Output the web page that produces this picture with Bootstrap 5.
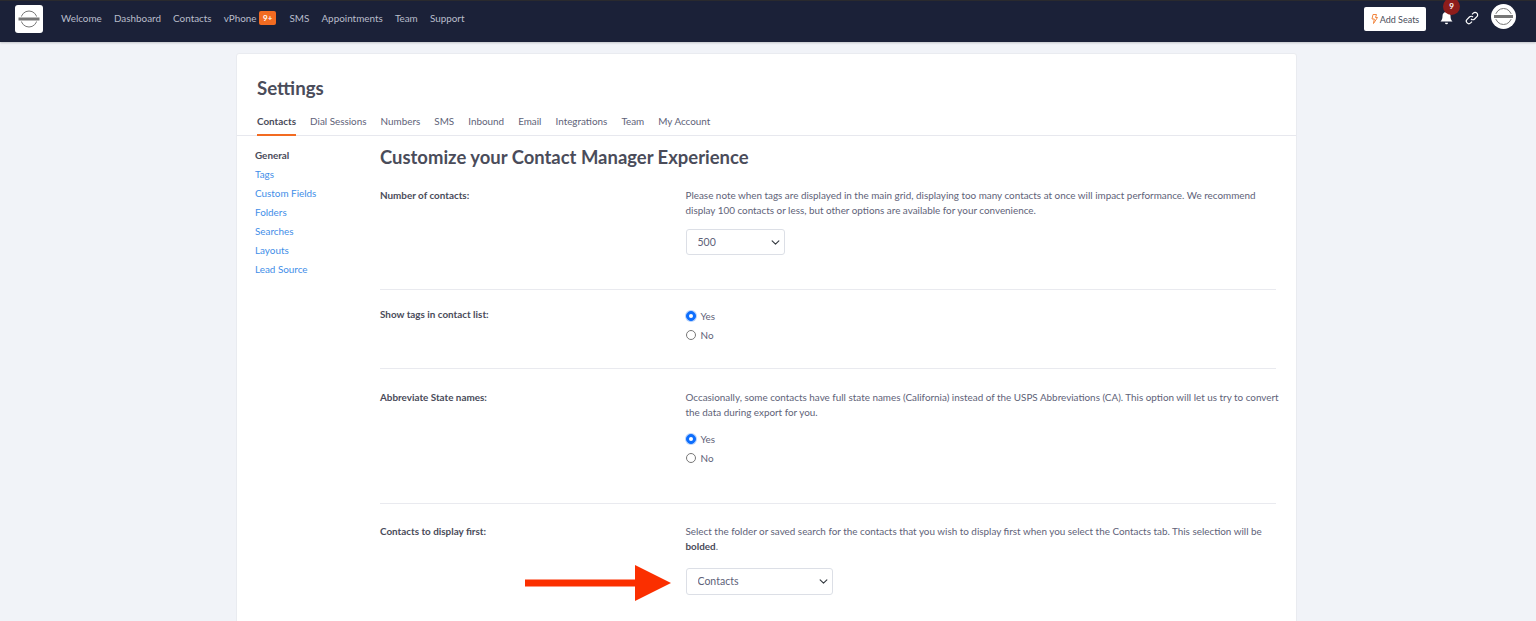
<!DOCTYPE html>
<html lang="en"><head><meta charset="utf-8"><title>Settings</title>
<link href="https://cdn.jsdelivr.net/npm/bootstrap@5.3.0/dist/css/bootstrap.min.css" rel="stylesheet">
<style>
html,body{height:621px;overflow:hidden}
body{background:#f1f3f8;font-family:Lato,"Liberation Sans",sans-serif;font-size:9.9px;color:#5e6278}
.topbar{background:#1b2138;height:41.5px;border-top:1px solid #2a2a2e;padding:0 20px 4px 15px;box-shadow:0 1px 2px rgba(0,0,0,.2)}
.logo-box{width:28px;height:28px;background:#fff;border-radius:3px;margin-right:18px}
.toplink{color:#b9bdcb;font-size:9.9px;text-decoration:none;margin:0 12.15px 2px 0;display:flex;align-items:center}
.orange-tag{background:#f26b21;color:#fff;font-size:8px;font-weight:700;padding:0 4px;height:14px;line-height:14px;border-radius:2px;margin-left:2.5px;margin-right:1px}
.seat-btn{background:#fff;border:0;border-radius:2px;height:24px;width:62px;font-size:9px;color:#4a4d5a;padding:0;margin-right:14px;display:flex;align-items:center;justify-content:center}
.bell-wrap{position:relative;width:14px;height:16px;margin:0 11px 4px 0}
.bell-count{position:absolute;left:3px;top:-11px;width:17px;height:17px;background:#8e1d1b;border-radius:50%;color:#fff;font-size:8px;font-weight:700;line-height:16px;text-align:center}
.link-ico{margin:0 12px 3px 0}
.avatar-ico{margin-bottom:6px}
.panel{width:1061px;height:700px;margin:11px 0 0 236px;background:#fff;border:1px solid #e9ebf0;border-radius:3px;position:relative}
.panel-title{font-size:18.7px;font-weight:700;color:#4a4c5a;padding:24px 0 0 20px;margin:0;line-height:21px}
.tab-row{border-bottom:1px solid #e7e8ee;padding:0 20px;gap:14.05px;margin-top:12px;height:25px}
.tab-item{color:#5e6278;font-size:9.9px;text-decoration:none;height:25px;line-height:21px}
.tab-item.on{font-weight:700;color:#4a4c5a;border-bottom:2px solid #f26b21}
.side{width:143px;padding:10px 0 0 18px}
.side a{display:block;height:19px;line-height:19px;color:#3f8ee8;text-decoration:none}
.side a.on{color:#4a4c5a;font-weight:700}
.main{width:896px;padding-top:9px}
.main-h{font-size:18.45px;font-weight:700;color:#4a4c5a;line-height:24px;margin:0 0 19px}
.sect{border-bottom:1px solid #e9eaef;display:flex}
.sect-l{width:305.5px;font-weight:700;color:#4a4c5a;line-height:15px;flex:none}
.sect-r{flex:1;line-height:15px}
.sect-r p{margin:0 -4px 11px 0}
.sect-r b{color:#4a4c5a}
.sel{font-size:10.5px;height:26px;color:#5e6278;padding:1px 11px 0;border-color:#dcdfe6;border-radius:3px;background-position:right 4px center;background-size:9px 9px;font-family:inherit}
.sel-a{width:99px}.sel-b{width:147px;height:27px}
.radio-line{margin:0;padding-left:0;min-height:0;height:19px;display:flex;align-items:center;gap:5px;font-size:9.9px}
.radio-line .form-check-input{float:none;margin:0;width:10px;height:10px;flex:none;border-color:#777}
.radio-line .form-check-input:checked{border-color:#0d6efd;box-shadow:0 0 0 1px #b8d3fb}
.s1{height:102px;padding-top:.5px}.s2{height:79px;padding-top:17px}.s3{height:135px;padding-top:21px}.s4{padding-top:20px;border:0}
.sect-r .para-b{margin-bottom:10px}
.sect-r .para-c{margin-right:0;margin-bottom:14px}
.pointer{position:absolute;left:288px;top:511px}
</style></head><body>
<nav class="topbar d-flex align-items-center">
<div class="logo-box d-flex align-items-center justify-content-center">
<svg width="26" height="26" viewBox="0 0 26 26"><circle cx="13" cy="13" r="8" fill="none" stroke="#777" stroke-width="1"/><rect x="2" y="10.500" width="22" height="5" fill="#fff"/><rect x="2.500" y="11.500" width="21" height="3" fill="#777"/></svg>
</div>
<a class="toplink" href="#">Welcome</a><a class="toplink" href="#">Dashboard</a><a class="toplink" href="#">Contacts</a>
<a class="toplink" href="#">vPhone<span class="orange-tag">9+</span></a>
<a class="toplink" href="#">SMS</a><a class="toplink" href="#">Appointments</a><a class="toplink" href="#">Team</a><a class="toplink" href="#">Support</a>
<div class="ms-auto d-flex align-items-center">
<button class="seat-btn" type="button"><svg width="7" height="10" viewBox="0 0 7 10"><path d="M2 .5h3.500L4.500 3.500h2L2.500 9.500l.8-4.500H1z" fill="none" stroke="#f2853d" stroke-width="1"/></svg>&nbsp;Add Seats</button>
<div class="bell-wrap"><svg width="13" height="15" viewBox="0 0 13 15"><path d="M6.500 1a1 1 0 0 1 1 1c2 .5 3 2 3 4 0 3 .7 4 2 5.500H.5C1.800 10 2.500 9 2.500 6c0-2 1-3.500 3-4a1 1 0 0 1 1-1z" fill="#fff"/><path d="M5 12.800h3a1.500 1.500 0 0 1-3 0z" fill="#fff"/></svg><span class="bell-count">9</span></div>
<svg class="link-ico" width="14" height="14" viewBox="0 0 14 14" fill="none" stroke="#fff" stroke-width="1.200"><path d="M6 8a2.500 2.500 0 0 0 3.600 0l2.300-2.300a2.500 2.500 0 0 0-3.600-3.600L7 3.400"/><path d="M8 6a2.500 2.500 0 0 0-3.600 0L2.100 8.300a2.500 2.500 0 0 0 3.600 3.600L7 10.600"/></svg>
<svg class="avatar-ico" width="25" height="25" viewBox="0 0 25 25"><circle cx="12.500" cy="12.500" r="12.500" fill="#fff"/><circle cx="12.500" cy="12.500" r="8" fill="none" stroke="#777"/><rect x="2.500" y="10" width="20" height="5" fill="#fff"/><rect x="3" y="11" width="19" height="3" fill="#777"/></svg>
</div>
</nav>
<div class="panel">
<h1 class="panel-title">Settings</h1>
<div class="tab-row d-flex">
<a class="tab-item on" href="#">Contacts</a><a class="tab-item" href="#">Dial Sessions</a><a class="tab-item" href="#">Numbers</a><a class="tab-item" href="#">SMS</a><a class="tab-item" href="#">Inbound</a><a class="tab-item" href="#">Email</a><a class="tab-item" href="#">Integrations</a><a class="tab-item" href="#">Team</a><a class="tab-item" href="#">My Account</a>
</div>
<div class="d-flex">
<div class="side"><a class="on" href="#">General</a><a href="#">Tags</a><a href="#">Custom Fields</a><a href="#">Folders</a><a href="#">Searches</a><a href="#">Layouts</a><a href="#">Lead Source</a></div>
<div class="main">
<h2 class="main-h">Customize your Contact Manager Experience</h2>
<div class="sect s1"><div class="sect-l">Number of contacts:</div><div class="sect-r"><p>Please note when tags are displayed in the main grid, displaying too many contacts at once will impact performance. We recommend display 100 contacts or less, but other options are available for your convenience.</p><select class="form-select sel sel-a"><option>500</option></select></div></div>
<div class="sect s2"><div class="sect-l">Show tags in contact list:</div><div class="sect-r">
<div class="form-check radio-line"><input class="form-check-input" type="radio" name="r1" checked id="a1"><label for="a1">Yes</label></div>
<div class="form-check radio-line"><input class="form-check-input" type="radio" name="r1" id="a2"><label for="a2">No</label></div></div></div>
<div class="sect s3"><div class="sect-l">Abbreviate State names:</div><div class="sect-r"><p class="para-b">Occasionally, some contacts have full state names (California) instead of the USPS Abbreviations (CA). This option will let us try to convert the data during export for you.</p>
<div class="form-check radio-line"><input class="form-check-input" type="radio" name="r2" checked id="b1"><label for="b1">Yes</label></div>
<div class="form-check radio-line"><input class="form-check-input" type="radio" name="r2" id="b2"><label for="b2">No</label></div></div></div>
<div class="sect s4"><div class="sect-l">Contacts to display first:</div><div class="sect-r"><p class="para-c">Select the folder or saved search for the contacts that you wish to display first when you select the Contacts tab. This selection will be <b>bolded</b>.</p><select class="form-select sel sel-b"><option>Contacts</option></select></div></div>
</div></div>
<svg class="pointer" width="146" height="36" viewBox="0 0 146 36"><path d="M0 14.500h110V0l36 18-36 18V21.500H0z" fill="#fb2f00"/></svg>
</div>
</body></html>
